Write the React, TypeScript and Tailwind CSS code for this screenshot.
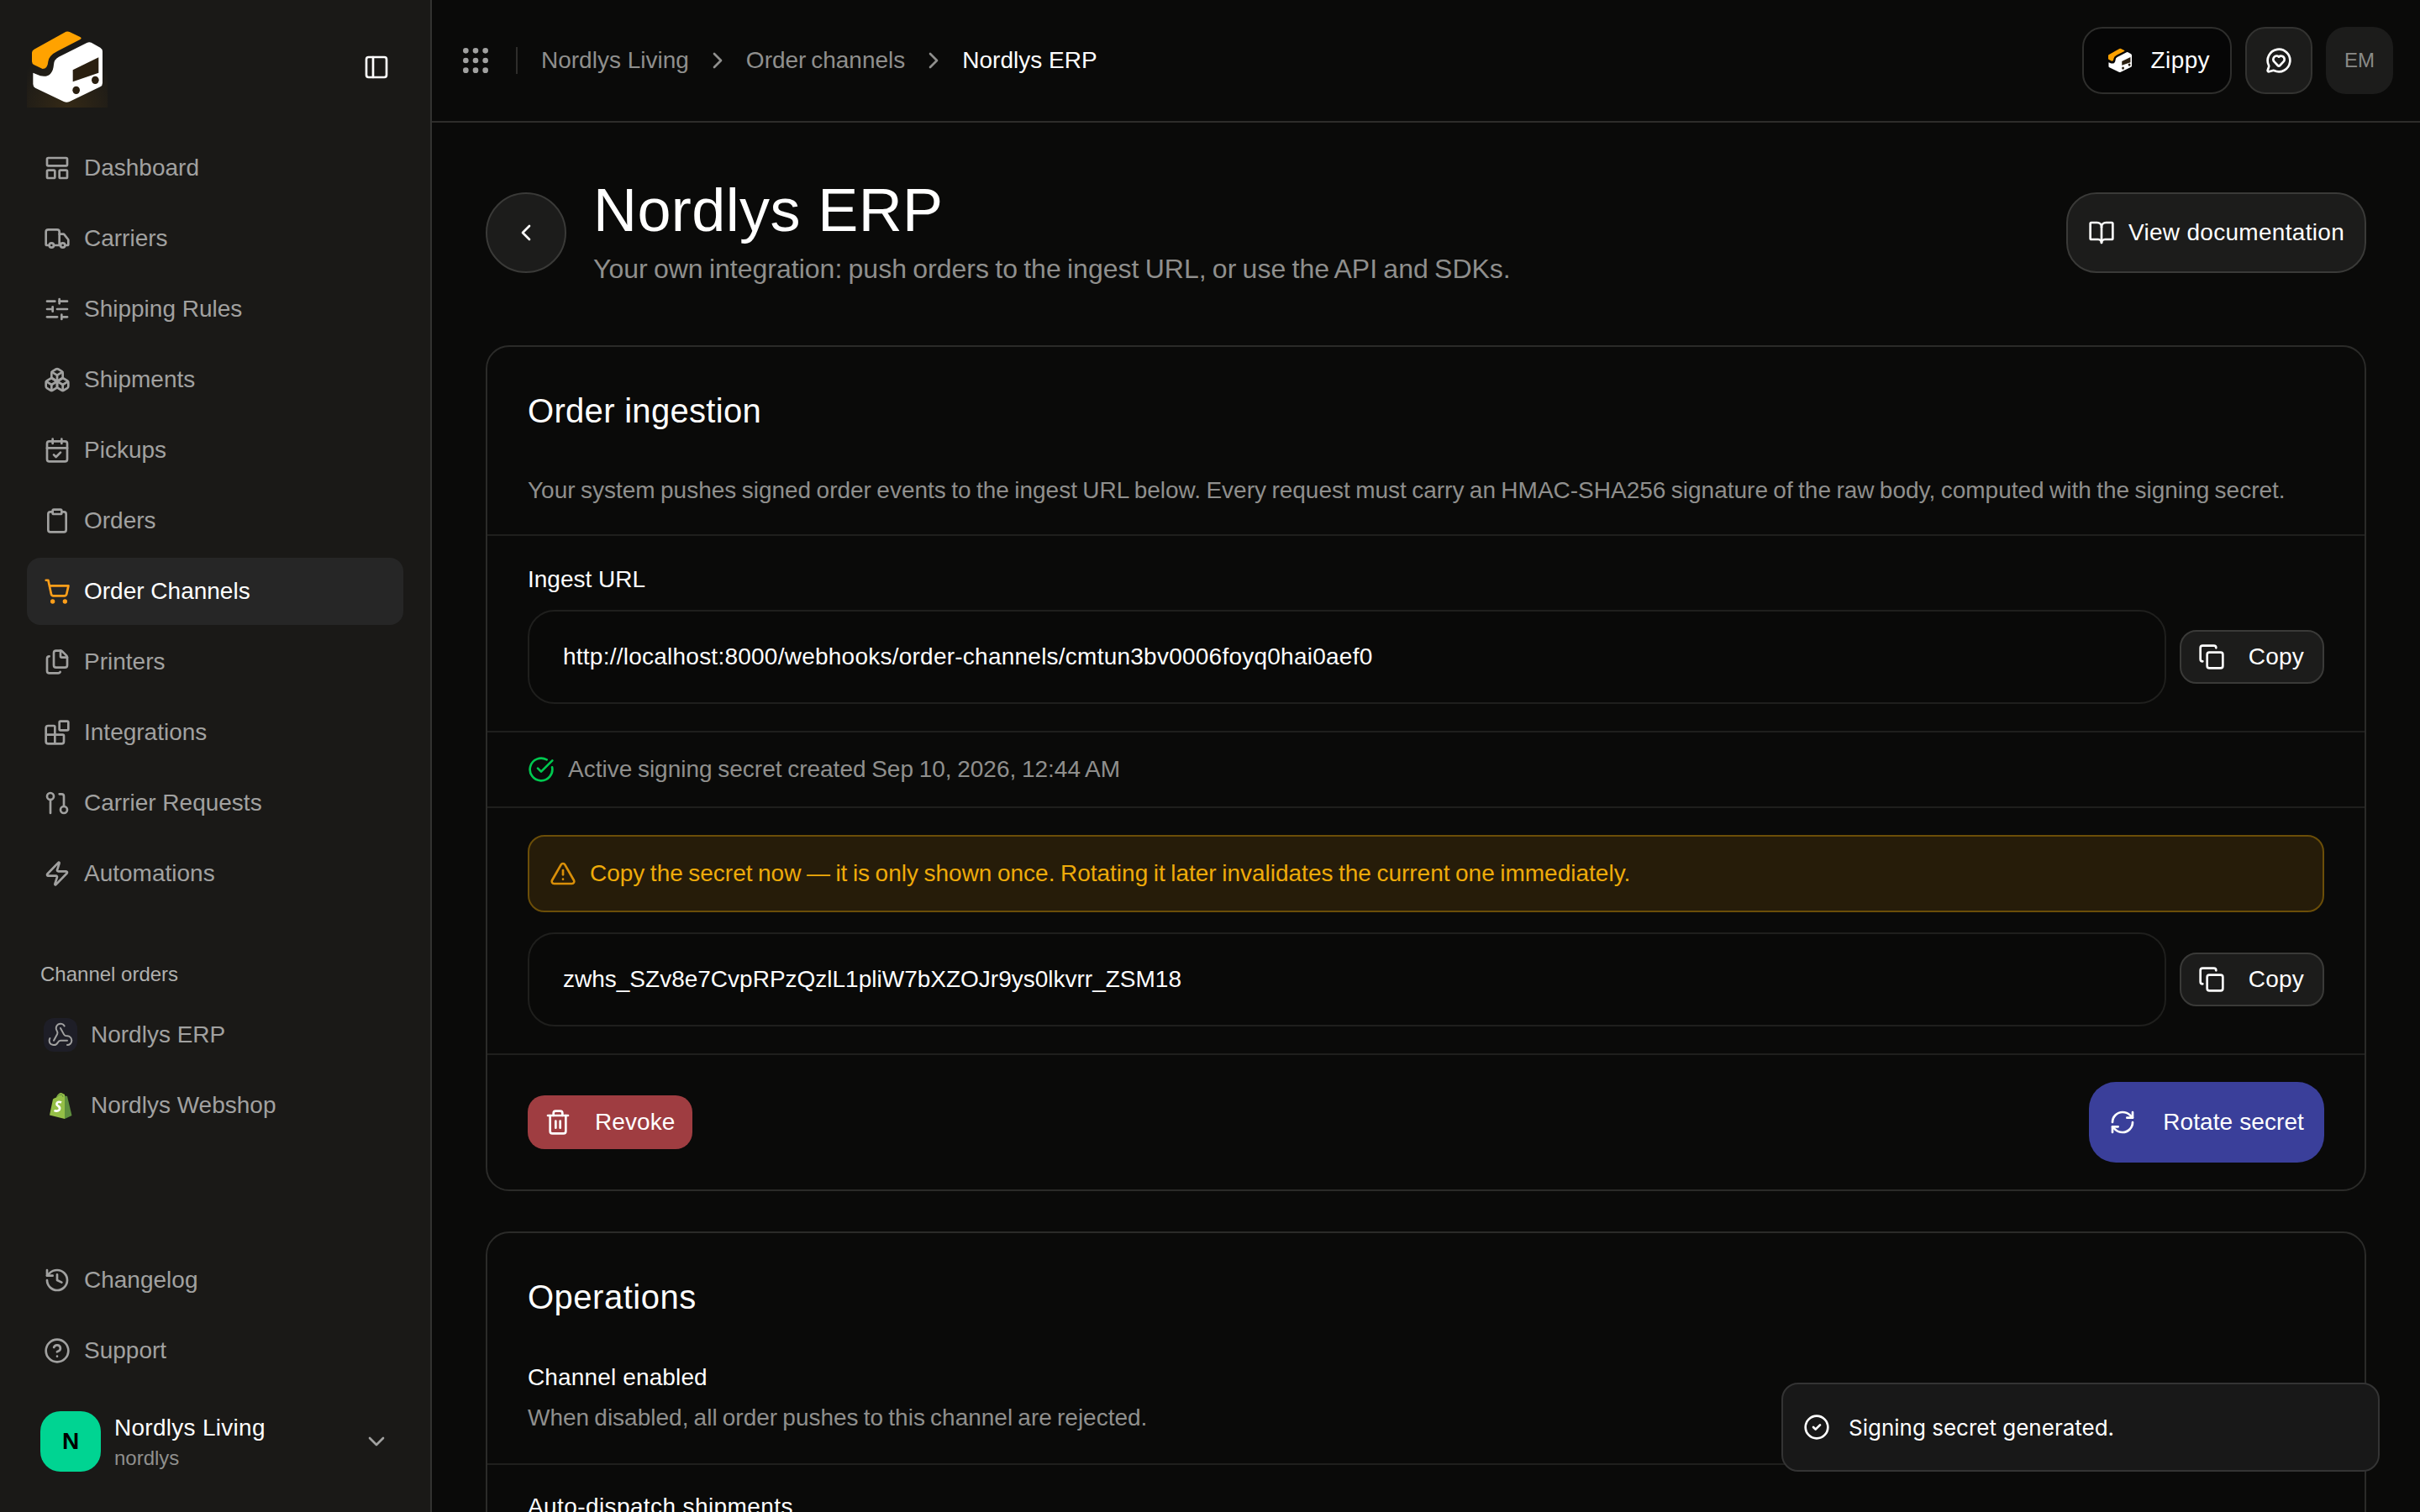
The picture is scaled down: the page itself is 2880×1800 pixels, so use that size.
import React from "react";
import {
  LayoutPanelTop, Truck, SlidersHorizontal, Boxes, CalendarCheck, Clipboard, ShoppingCart, Files, Blocks, Zap,
  History, CircleHelp, ChevronDown, ChevronRight, ChevronLeft, PanelLeft, Grip, MessageCircleHeart, BookOpen,
  Copy, CircleCheckBig, CircleCheck, TriangleAlert, Trash2, RefreshCw, Webhook,
} from "lucide-react";

function Logo({ glow = false }: { glow?: boolean }) {
  return (
    <svg viewBox="36 36 288 288" className="h-full w-full">
      <defs>
        <radialGradient id="logoGlow" cx="50%" cy="100%" r="70%">
          <stop offset="0%" stopColor="#f59e0b" stopOpacity="0.12" />
          <stop offset="100%" stopColor="#f59e0b" stopOpacity="0" />
        </radialGradient>
      </defs>
      {glow && <rect x="36" y="36" width="288" height="288" fill="url(#logoGlow)" />}
      <path
        d="M62 116 L170 56 Q180 50 190 55 L226 72 Q234 77 226 81 L146 122 Q114 138 112 160 Q110 186 92 186 L62 172 Q54 168 54 160 L54 128 Q54 120 62 116 Z"
        fill="#ffa200"
      />
      <path
        d="M150 143 L250 93 Q258 89 266 92 L298 110 Q306 115 306 124 L306 236 Q306 246 298 250 L188 303 Q178 308 168 303 L66 254 Q58 250 58 240 L58 200 L84 211 Q128 220 132 170 Q133 152 150 143 Z"
        fill="#ffffff"
      />
      <path d="M200 190 L292 145 L292 200 L200 232 Z" fill="#2a1f10" />
      <ellipse cx="212" cy="262" rx="13" ry="14" fill="#2a1f10" />
      <ellipse cx="280" cy="226" rx="13" ry="14" fill="#2a1f10" />
    </svg>
  );
}

function ShopifyBag() {
  return (
    <svg viewBox="0 0 28 32" className="h-4 w-3.5">
      <path d="M1 27.5 L5 8.5 Q6 7.5 9 6.5 Q11 1 15 1 L19 3 L19 32 Z" fill="#95bf47" />
      <path d="M19 4.5 L22 5 L27.5 28 L19 32 Z" fill="#5e8e3e" />
      <path d="M9.5 6 Q12 2.5 15.5 3 Q17 5 17 6" fill="none" stroke="#5e8e3e" strokeWidth="1" />
      <path d="M15 12.5 Q12 11 10 12.7 Q8.5 15 11 16.5 Q14 18.2 12.8 21 Q10 23.8 6.5 21.8" fill="none" stroke="#ffffff" strokeWidth="2.6" />
    </svg>
  );
}

function PullRequestIcon({ className }: { className?: string }) {
  return (
    <svg viewBox="0 0 24 24" className={className} fill="none" stroke="currentColor" strokeWidth="2" strokeLinecap="round" strokeLinejoin="round">
      <circle cx="6" cy="6" r="3" />
      <path d="M6 9v12" />
      <circle cx="18" cy="18" r="3" />
      <path d="M14 4h2a2 2 0 0 1 2 2v9" />
    </svg>
  );
}

type IconType = React.ComponentType<{ className?: string }>;

function NavItem({ icon: Icon, label, active = false }: { icon: IconType; label: string; active?: boolean }) {
  return (
    <div className={`mx-4 flex h-10 items-center gap-2 rounded-lg pl-2.5 text-sm ${active ? "bg-[#262626] text-white" : "text-[#a1a1a0]"}`}>
      <Icon className={`h-4 w-4 ${active ? "text-[#ff9f1a]" : "text-[#a1a1a0]"}`} />
      <span>{label}</span>
    </div>
  );
}

const mainNav: { icon: IconType; label: string; active?: boolean }[] = [
  { icon: LayoutPanelTop, label: "Dashboard" },
  { icon: Truck, label: "Carriers" },
  { icon: SlidersHorizontal, label: "Shipping Rules" },
  { icon: Boxes, label: "Shipments" },
  { icon: CalendarCheck, label: "Pickups" },
  { icon: Clipboard, label: "Orders" },
  { icon: ShoppingCart, label: "Order Channels", active: true },
  { icon: Files, label: "Printers" },
  { icon: Blocks, label: "Integrations" },
  { icon: PullRequestIcon, label: "Carrier Requests" },
  { icon: Zap, label: "Automations" },
];

function Sidebar() {
  return (
    <aside className="flex h-full w-[257px] shrink-0 flex-col border-r border-[#333331] bg-[#1a1917]">
      <div className="flex h-20 shrink-0 items-center justify-between pl-4 pr-6">
        <div className="h-12 w-12">
          <Logo glow />
        </div>
        <PanelLeft className="h-4 w-4 text-white" />
      </div>
      <nav className="flex flex-col gap-0.5">
        {mainNav.map((n) => (
          <NavItem key={n.label} icon={n.icon} label={n.label} active={n.active} />
        ))}
      </nav>
      <div className="ml-6 mt-8 mb-2 text-xs leading-4 text-[#b0b0ae]">Channel orders</div>
      <div className="flex flex-col gap-0.5">
        <div className="mx-4 flex h-10 items-center gap-2 pl-2.5 text-sm text-[#a1a1a0]">
          <div className="flex h-5 w-5 items-center justify-center rounded-md bg-[#1e1e27]">
            <Webhook className="h-4 w-4 shrink-0" strokeWidth={1.5} />
          </div>
          <span>Nordlys ERP</span>
        </div>
        <div className="mx-4 flex h-10 items-center gap-2 pl-2.5 text-sm text-[#a1a1a0]">
          <div className="flex h-5 w-5 items-center justify-center">
            <ShopifyBag />
          </div>
          <span>Nordlys Webshop</span>
        </div>
      </div>
      <div className="mt-auto flex flex-col gap-0.5">
        <NavItem icon={History} label="Changelog" />
        <NavItem icon={CircleHelp} label="Support" />
      </div>
      <div className="mt-4 mb-6 flex h-9 shrink-0 items-center pl-6 pr-6">
        <div className="flex h-9 w-9 items-center justify-center rounded-xl bg-[#00d492] text-sm font-bold text-black">N</div>
        <div className="ml-2 flex flex-col">
          <span className="text-sm leading-5 tracking-[0.14px] text-white">Nordlys Living</span>
          <span className="text-xs leading-4 text-[#8f8f8d]">nordlys</span>
        </div>
        <ChevronDown className="ml-auto h-4 w-4 text-[#a1a1a0]" />
      </div>
    </aside>
  );
}

function Header() {
  return (
    <header className="flex h-[73px] shrink-0 items-center border-b border-[#2e2d2b] pl-4 pr-4">
      <Grip className="h-5 w-5 text-[#a1a1a0]" />
      <div className="ml-[14px] h-4 w-px bg-[#2e2d2b]" />
      <div className="ml-[14px] flex items-center gap-[9px] text-sm">
        <span className="text-[#8f8f8d]">Nordlys Living</span>
        <ChevronRight className="h-4 w-4 text-[#8f8f8d]" />
        <span className="text-[#8f8f8d] [word-spacing:-1px]">Order channels</span>
        <ChevronRight className="h-4 w-4 text-[#8f8f8d]" />
        <span className="text-white">Nordlys ERP</span>
      </div>
      <div className="ml-auto flex items-center gap-2">
        <div className="flex h-10 items-center gap-[10.5px] rounded-xl border border-[#2e2e2c] bg-[#060606] pl-[13.5px] pr-3 text-sm tracking-[0.2px] text-white">
          <div className="h-4 w-4">
            <Logo />
          </div>
          <span>Zippy</span>
        </div>
        <div className="flex h-10 w-10 items-center justify-center rounded-xl border border-[#333331] bg-[#1c1c1b] text-white">
          <MessageCircleHeart className="h-4 w-4" />
        </div>
        <div className="flex h-10 w-10 items-center justify-center rounded-xl bg-[#1c1c1b] text-xs font-medium text-[#8a8a88]">EM</div>
      </div>
    </header>
  );
}

function CopyButton() {
  return (
    <button className="flex h-8 shrink-0 items-center gap-3.5 rounded-[10px] border border-[#3a3a38] bg-[#1c1c1b] pl-2.5 pr-[11px] text-sm tracking-[0.1px] text-white">
      <Copy className="h-4 w-4" />
      <span>Copy</span>
    </button>
  );
}

function ReadOnlyField({ value, wide = false }: { value: string; wide?: boolean }) {
  return (
    <div className="flex items-center gap-2">
      <div className={`flex h-14 flex-1 items-center rounded-2xl border border-[#1f1f1d] bg-[#090908] px-5 text-sm text-white ${wide ? "tracking-[0.12px]" : ""}`}>{value}</div>
      <CopyButton />
    </div>
  );
}

function OrderIngestionCard() {
  return (
    <section className="rounded-[14px] border border-[#2b2b29]">
      <div className="px-6 pb-4 pt-6">
        <h2 className="text-xl leading-7 tracking-[0.15px] text-white">Order ingestion</h2>
        <p className="mt-[23.5px] text-sm leading-5 text-[#8f8f8d] [word-spacing:-0.7px]">
          Your system pushes signed order events to the ingest URL below. Every request must carry an HMAC-SHA256 signature of the raw body, computed with the signing secret.
        </p>
      </div>
      <div className="border-t border-[#1f1f1d] px-6 py-4">
        <div className="text-sm leading-5 text-white">Ingest URL</div>
        <div className="mt-2">
          <ReadOnlyField wide value="http://localhost:8000/webhooks/order-channels/cmtun3bv0006foyq0hai0aef0" />
        </div>
      </div>
      <div className="flex h-[45px] items-center gap-2 border-t border-[#1f1f1d] px-6 text-sm text-[#8f8f8d] [word-spacing:-0.57px]">
        <CircleCheckBig className="h-4 w-4 text-[#00c950]" />
        <span>Active signing secret created Sep 10, 2026, 12:44 AM</span>
      </div>
      <div className="flex flex-col gap-3 border-t border-[#1f1f1d] px-6 py-4">
        <div className="flex h-[46px] items-center gap-2 rounded-[10px] border border-[#6b4e08] bg-[#261c09] px-3 text-sm text-[#eeab0a] [word-spacing:-0.64px]">
          <TriangleAlert className="h-4 w-4 text-[#d98f09]" />
          <span>Copy the secret now — it is only shown once. Rotating it later invalidates the current one immediately.</span>
        </div>
        <ReadOnlyField value="zwhs_SZv8e7CvpRPzQzlL1pliW7bXZOJr9ys0lkvrr_ZSM18" />
      </div>
      <div className="flex items-center justify-between border-t border-[#1f1f1d] px-6 py-4">
        <button className="flex h-8 items-center gap-3.5 rounded-[10px] bg-[#9f3d41] px-2.5 text-sm tracking-[0.05px] text-white">
          <Trash2 className="h-4 w-4" />
          <span>Revoke</span>
        </button>
        <button className="flex h-12 items-center gap-4 rounded-2xl bg-[#3a3f9a] px-3 text-sm tracking-[0.05px] text-white">
          <RefreshCw className="h-4 w-4" />
          <span>Rotate secret</span>
        </button>
      </div>
    </section>
  );
}

function OperationsCard() {
  return (
    <section className="rounded-[14px] border border-[#2b2b29]">
      <div className="px-6 pb-[17px] pt-6">
        <h2 className="text-xl leading-7 tracking-[0.25px] text-white">Operations</h2>
        <div className="mt-6 text-sm leading-5 tracking-[0.07px] text-white">Channel enabled</div>
        <div className="mt-1 text-sm leading-5 text-[#8f8f8d] [word-spacing:-0.8px]">When disabled, all order pushes to this channel are rejected.</div>
      </div>
      <div className="border-t border-[#1f1f1d] px-6 pb-4 pt-[15px]">
        <div className="text-sm leading-5 tracking-[0.2px] text-white">Auto-dispatch shipments</div>
      </div>
    </section>
  );
}

export default function App() {
  return (
    <div className="relative flex h-[900px] w-[1440px] overflow-hidden bg-[#0a0a09] [font-family:'Liberation_Sans',sans-serif] [zoom:2]">
      <Sidebar />
      <main className="flex min-w-0 flex-1 flex-col">
        <Header />
        <div className="flex flex-col px-8 pt-8">
          <div className="flex items-center">
            <button className="flex h-12 w-12 shrink-0 items-center justify-center rounded-full border border-[#3a3a38] bg-[#1c1c1b] text-white">
              <ChevronLeft className="h-4 w-4" />
            </button>
            <div className="ml-4">
              <h1 className="text-4xl leading-10 tracking-[0.2px] text-white">Nordlys ERP</h1>
              <p className="mt-[3px] text-base leading-6 text-[#8f8f8d] [word-spacing:-0.8px]">Your own integration: push orders to the ingest URL, or use the API and SDKs.</p>
            </div>
            <button className="ml-auto flex h-12 items-center gap-2 rounded-[18px] border border-[#3a3a38] bg-[#1c1c1b] px-3 text-sm tracking-[0.15px] text-white">
              <BookOpen className="h-4 w-4" />
              <span>View documentation</span>
            </button>
          </div>
          <div className="mt-[33.5px] flex flex-col gap-6">
            <OrderIngestionCard />
            <OperationsCard />
          </div>
        </div>
      </main>
      <div className="absolute bottom-6 right-6 flex h-[53px] w-[356px] items-center gap-[11px] rounded-[10px] border border-[#343434] bg-[#181818] pl-3 text-white">
        <CircleCheck className="h-4 w-4" />
        <span className="text-[13px] [font-family:Inter,sans-serif]">Signing secret generated.</span>
      </div>
    </div>
  );
}
